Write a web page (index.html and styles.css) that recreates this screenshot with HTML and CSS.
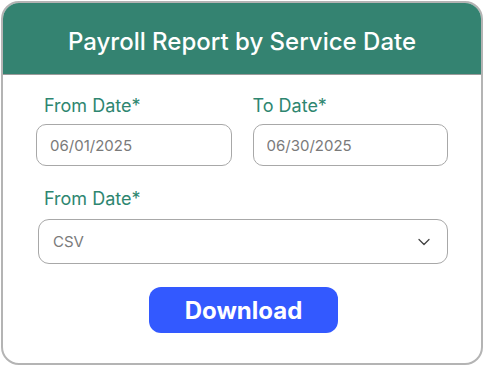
FILE: index.html
```html
<!DOCTYPE html>
<html lang="en">
<head>
  <meta charset="UTF-8">
  <meta name="viewport" content="width=device-width, initial-scale=1.0">
  <title>Payroll Report by Service Date</title>
  <link rel="stylesheet" href="styles.css">
</head>
<body>
  <div class="card">
    <div class="card-header">
      <h1>Payroll Report by Service Date</h1>
    </div>
    <div class="card-body">
      <div class="date-row">
        <div class="field">
          <label for="fromDate">From Date*</label>
          <input type="text" id="fromDate" value="06/01/2025">
        </div>
        <div class="field field-to">
          <label for="toDate">To Date*</label>
          <input type="text" id="toDate" value="06/30/2025">
        </div>
      </div>
      <div class="field field-format">
        <label for="format">From Date*</label>
        <div class="select">
          <span>CSV</span>
          <svg viewBox="0 0 16 16" fill="none">
            <path d="M3 5.5L8 10.5L13 5.5" stroke="#444" stroke-width="1.3" stroke-linecap="round" stroke-linejoin="round"/>
          </svg>
        </div>
      </div>
      <button class="download-button" type="button">Download</button>
    </div>
  </div>
</body>
</html>
```

FILE: styles.css
```css
* {
  margin: 0;
  padding: 0;
  box-sizing: border-box;
}

html, body {
  height: 100%;
  font-family: 'Inter', sans-serif;
  background: #fff;
  overflow: hidden;
}

body {
  padding: 1px;
}

.card {
  height: 364px;
  border: 2px solid #b4b4b4;
  border-radius: 18px;
  overflow: hidden;
  display: flex;
  flex-direction: column;
}

.card-header {
  height: 72px;
  padding-top: 5px;
  background: #348371;
  border-bottom: 1px solid #9a9a9a;
  display: flex;
  align-items: center;
  justify-content: center;
}

h1 {
  color: #fff;
  font-size: 24px;
  font-weight: 500;
}

.card-body {
  flex: 1;
  padding: 20px 33px 0 33px;
  display: flex;
  flex-direction: column;
}

.date-row {
  display: flex;
  gap: 21px;
}

.field {
  flex: 1;
  min-width: 0;
  display: flex;
  flex-direction: column;
}

.field label {
  color: #2e8670;
  font-size: 18px;
  padding-left: 8px;
  margin-bottom: 8px;
}

.field-to label {
  padding-left: 0;
}

.field input {
  width: 100%;
  height: 42px;
  border: 1px solid #a8a8a8;
  border-radius: 10px;
  padding: 0 13px;
  font-family: 'Inter', sans-serif;
  font-size: 15px;
  color: #7a7a7a;
  outline: none;
}

.field-format {
  flex: none;
  margin-top: 22px;
  padding-left: 2px;
}

.field-format label {
  padding-left: 6px;
  margin-bottom: 10px;
}

.select {
  height: 45px;
  border: 1px solid #a8a8a8;
  border-radius: 11px;
  padding: 0 15px 0 14px;
  display: flex;
  align-items: center;
  justify-content: space-between;
  font-size: 15px;
  color: #7a7a7a;
}

.select svg {
  width: 16px;
  height: 16px;
}

.download-button {
  align-self: center;
  margin-top: 23px;
  margin-left: 3px;
  width: 189px;
  height: 46px;
  border: none;
  border-radius: 12px;
  background: #3359ff;
  color: #fff;
  font-family: 'Inter', sans-serif;
  font-size: 24px;
  font-weight: 700;
  cursor: pointer;
}
```
